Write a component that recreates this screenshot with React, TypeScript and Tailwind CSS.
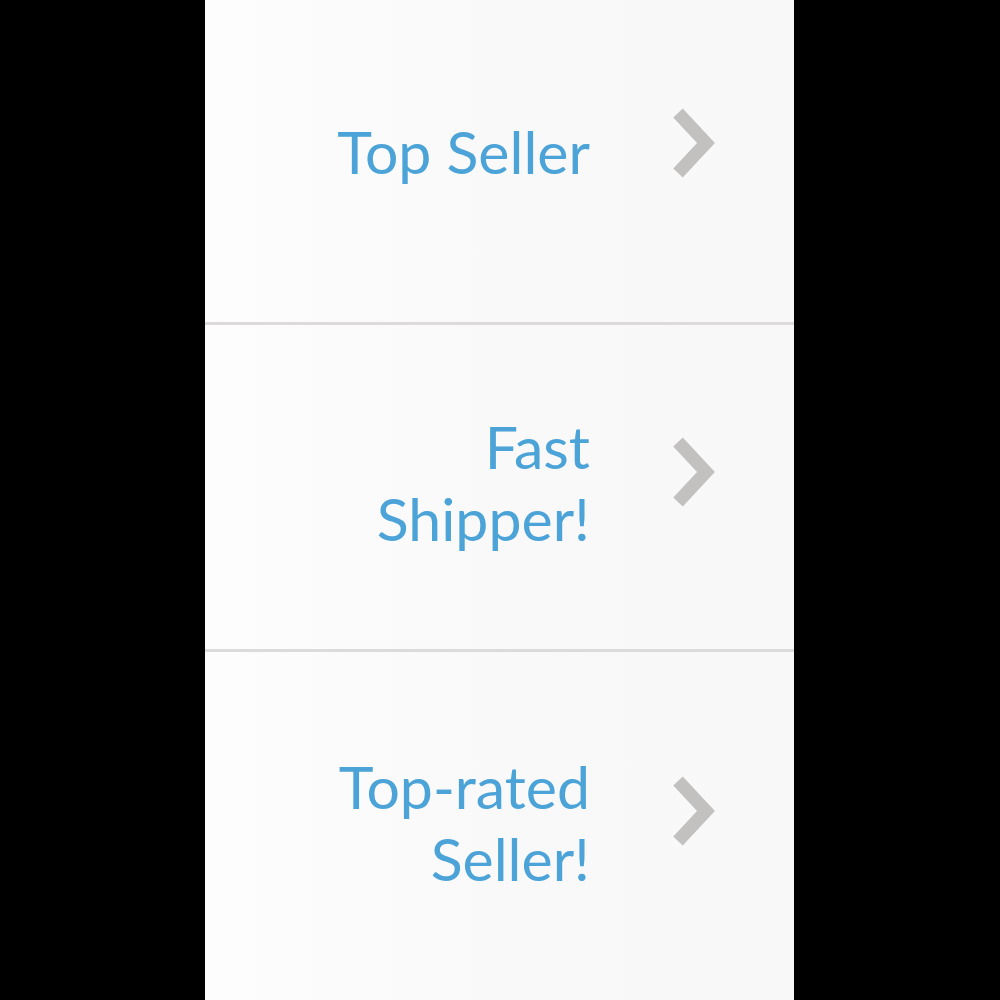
import React from "react";

const Chevron = () => (
  <svg width="46" height="72" viewBox="0 0 46 72" className="shrink-0">
    <polyline points="8,6 36,36 8,66" fill="none" stroke="#c2c1bf" strokeWidth="13" strokeLinejoin="miter" strokeLinecap="butt" />
  </svg>
);

const Row = ({ lines, h, tm, cm }: { lines: string[]; h: string; tm: string; cm: string }) => (
  <div className={`flex items-center justify-end pr-[78px] ${h}`}>
    <div className={`text-right text-[#4ba3d7] text-[59px] leading-[72px] ${tm}`} style={{ fontFamily: "Lato, 'Open Sans', sans-serif" }}>
      {lines.map((l) => (
        <div key={l}>{l}</div>
      ))}
    </div>
    <div className={`ml-[80px] ${cm}`}>
      <Chevron />
    </div>
  </div>
);

export default function App() {
  return (
    <div className="w-[1000px] h-[1000px] bg-black flex justify-center overflow-hidden">
      <div className="w-[589px] ml-[-1px] h-full bg-gradient-to-r from-[#fdfdfd] via-[#f9f9f9] to-[#f8f8f8] flex flex-col">
        <Row lines={["Top Seller"]} h="h-[322px]" tm="mt-[-18px]" cm="mb-[36px]" />
        <div className="h-[3px] bg-[#dcdada]" />
        <Row lines={["Fast", "Shipper!"]} h="h-[324px]" tm="mt-[-8px]" cm="mb-[30px]" />
        <div className="h-[3px] bg-[#dcdada]" />
        <Row lines={["Top-rated", "Seller!"]} h="h-[346px]" tm="mt-[-4px]" cm="mb-[28px]" />
      </div>
    </div>
  );
}
